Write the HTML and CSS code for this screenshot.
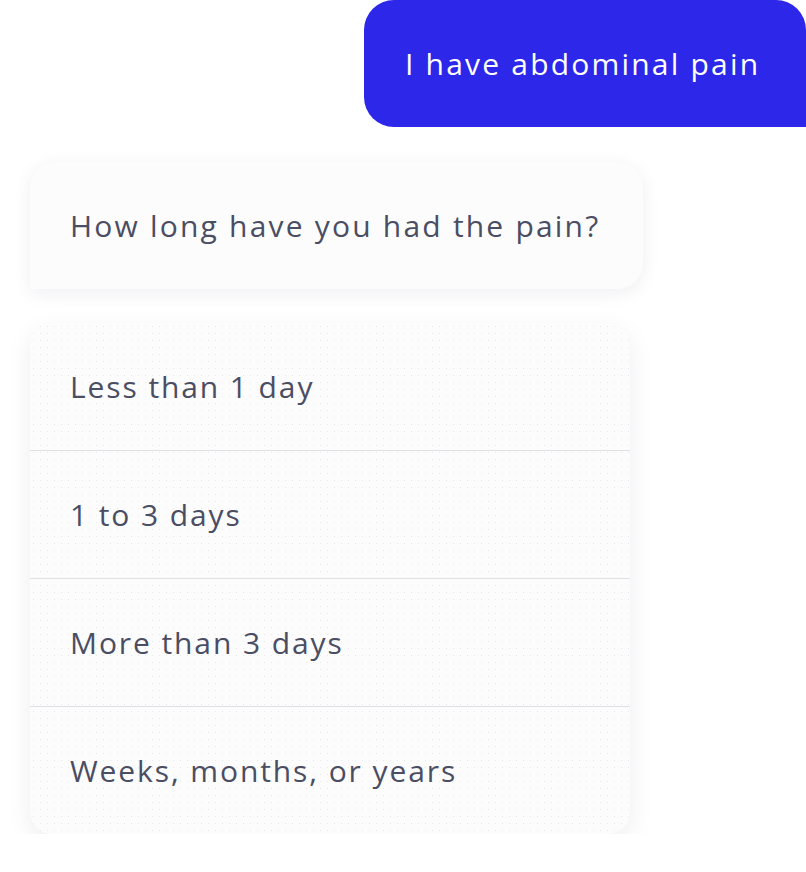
FILE: index.html
```html
<!DOCTYPE html>
<html lang="en">
  <head>
    <title>Symptom chat</title>
    <meta charset="UTF-8" />
    <meta name="viewport" content="width=device-width, initial-scale=1.0" />
    <link rel="stylesheet" href="styles.css">
  </head>
  <body>
    <div class="chat">
      <div class="bubble user">I have abdominal pain</div>

      <div class="bubble bot">How long have you had the pain?</div>

      <ul class="options">
        <li class="option">Less than 1 day</li>
        <li class="option">1 to 3 days</li>
        <li class="option">More than 3 days</li>
        <li class="option">Weeks, months, or years</li>
      </ul>
    </div>
  </body>
</html>
```

FILE: styles.css
```css
body {
  font-family: "Open Sans", "Liberation Sans", sans-serif;
  background-color: #ffffff;
  margin: 0;
}
.chat {
  display: flex;
  flex-direction: column;
  width: 806px;
}
.bubble {
  display: flex;
  align-items: center;
  box-sizing: border-box;
  height: 127px;
  font-size: 30px;
  letter-spacing: 2.2px;
}
.user {
  align-self: flex-end;
  width: 442px;
  padding-left: 41px;
  background-color: #2d27ea;
  color: #ffffff;
  border-radius: 30px 30px 0 30px;
}
.bot {
  width: 613px;
  margin: 35px 0 0 30px;
  padding-left: 40px;
  background-color: #fcfcfd;
  color: #4b4e62;
  border-radius: 26px 26px 26px 0;
  box-shadow: 0 4px 18px rgba(30, 30, 70, 0.07);
}
.options {
  list-style: none;
  width: 600px;
  margin: 34px 0 0 30px;
  padding: 0;
  background-color: #fcfcfd;
  background-image: radial-gradient(circle, #e8e8ee 0.6px, transparent 1px);
  background-size: 7px 7px;
  border-radius: 22px;
  overflow: hidden;
  box-shadow: 0 8px 26px rgba(30, 30, 70, 0.07);
}
.option {
  display: flex;
  align-items: center;
  height: 127px;
  padding-left: 40px;
  font-size: 30px;
  letter-spacing: 1.9px;
  color: #4b4e62;
  border-top: 1.5px solid #e0e0e4;
}
.option:first-child {
  border-top: none;
}
```
